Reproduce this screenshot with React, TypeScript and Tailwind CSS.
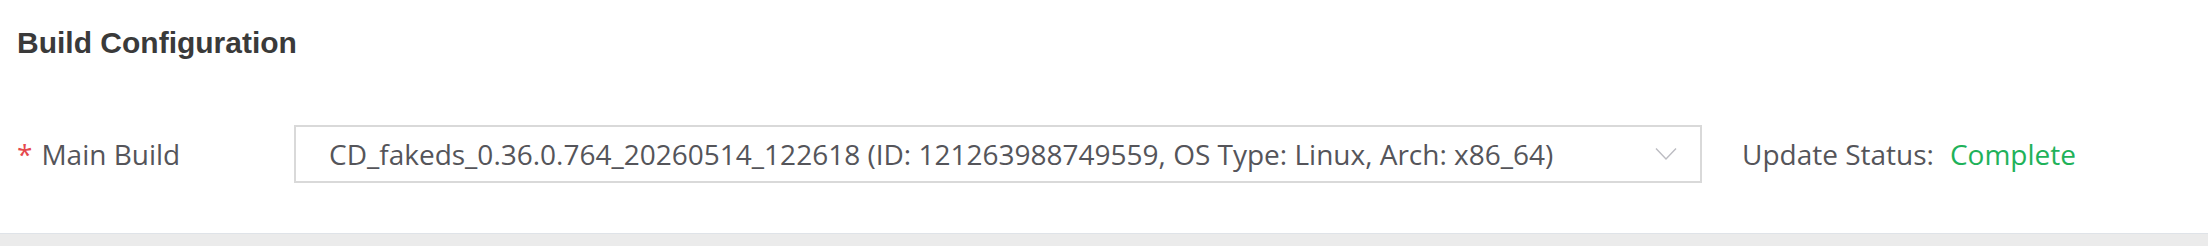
const buildLabel =
  "CD_fakeds_0.36.0.764_20260514_122618 (ID: 121263988749559, OS Type: Linux, Arch: x86_64)";

const App = () => {
  return (
    <div className="w-[2208px] h-[246px] flex flex-col bg-white">
      <div className="h-[233px] px-[17px] flex flex-col">
        <div className="pt-[23px] h-[116px]">
          <h2 className="text-[30px] leading-[40px] font-bold text-[#3a3a3a] font-['Liberation_Sans',Arial,sans-serif]">
            Build Configuration
          </h2>
        </div>
        <div className="flex items-center h-[76px] font-['Open_Sans',sans-serif] text-[28px] text-[#55555a]">
          <div className="w-[277px] flex items-center">
            <span className="text-[#e5484d] mr-[9px]">*</span>
            <span>Main Build</span>
          </div>
          <div className="w-[1408px] h-[58px] border-2 border-[#d9d9d9] flex items-center pl-[33px] pr-[23px] cursor-pointer">
            <span className="flex-1 truncate">{buildLabel}</span>
            <svg width="22" height="14" viewBox="0 0 22 14" fill="none">
              <polyline
                points="1,1.5 11,12 21,1.5"
                stroke="#bcbcc2"
                strokeWidth="1.4"
              />
            </svg>
          </div>
          <div className="ml-[40px] flex items-center">
            <span>Update Status:</span>
            <span className="ml-[16px] text-[#1fb25a]">Complete</span>
          </div>
        </div>
      </div>
      <div className="flex-1 bg-[#ebebeb] border-t border-[#dfe3e8]" />
    </div>
  );
};

export default App;
